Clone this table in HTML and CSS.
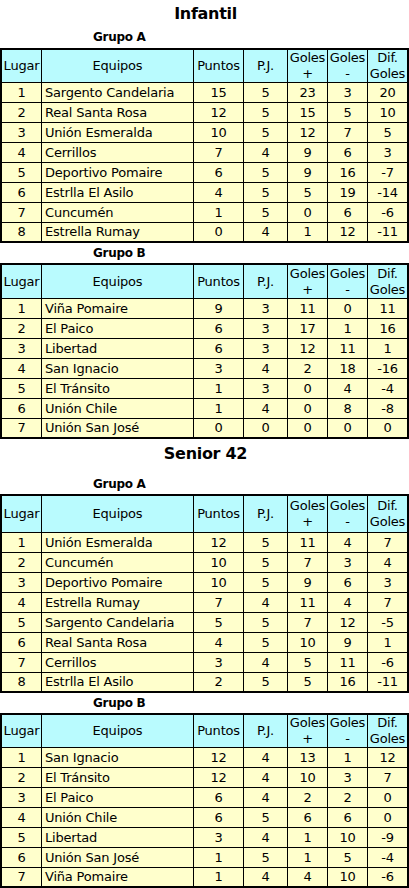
FILE: index.html
```html
<!DOCTYPE html>
<html lang="es">
<head>
<meta charset="utf-8">
<title>Posiciones</title>
<link rel="stylesheet" href="styles.css">
</head>
<body>
<div class="page">
  <h1 class="title title-first">Infantil</h1>
  <h2 class="group group-first">Grupo A</h2>
  <table class="standings hdr-32">
    <colgroup><col class="c-lugar"><col class="c-equipo"><col class="c-pts"><col class="c-pj"><col class="c-gf"><col class="c-gc"><col class="c-dif"></colgroup>
    <thead><tr><th>Lugar</th><th>Equipos</th><th>Puntos</th><th>P.J.</th><th>Goles<br>+</th><th>Goles<br>-</th><th>Dif.<br>Goles</th></tr></thead>
    <tbody>
      <tr><td>1</td><td class="team">Sargento Candelaria</td><td>15</td><td>5</td><td>23</td><td>3</td><td>20</td></tr>
      <tr><td>2</td><td class="team">Real Santa Rosa</td><td>12</td><td>5</td><td>15</td><td>5</td><td>10</td></tr>
      <tr><td>3</td><td class="team">Unión Esmeralda</td><td>10</td><td>5</td><td>12</td><td>7</td><td>5</td></tr>
      <tr><td>4</td><td class="team">Cerrillos</td><td>7</td><td>4</td><td>9</td><td>6</td><td>3</td></tr>
      <tr><td>5</td><td class="team">Deportivo Pomaire</td><td>6</td><td>5</td><td>9</td><td>16</td><td>-7</td></tr>
      <tr><td>6</td><td class="team">Estrlla El Asilo</td><td>4</td><td>5</td><td>5</td><td>19</td><td>-14</td></tr>
      <tr><td>7</td><td class="team">Cuncumén</td><td>1</td><td>5</td><td>0</td><td>6</td><td>-6</td></tr>
      <tr><td>8</td><td class="team">Estrella Rumay</td><td>0</td><td>4</td><td>1</td><td>12</td><td>-11</td></tr>
    </tbody>
  </table>
  <h2 class="group">Grupo B</h2>
  <table class="standings hdr-34">
    <colgroup><col class="c-lugar"><col class="c-equipo"><col class="c-pts"><col class="c-pj"><col class="c-gf"><col class="c-gc"><col class="c-dif"></colgroup>
    <thead><tr><th>Lugar</th><th>Equipos</th><th>Puntos</th><th>P.J.</th><th>Goles<br>+</th><th>Goles<br>-</th><th>Dif.<br>Goles</th></tr></thead>
    <tbody>
      <tr><td>1</td><td class="team">Viña Pomaire</td><td>9</td><td>3</td><td>11</td><td>0</td><td>11</td></tr>
      <tr><td>2</td><td class="team">El Paico</td><td>6</td><td>3</td><td>17</td><td>1</td><td>16</td></tr>
      <tr><td>3</td><td class="team">Libertad</td><td>6</td><td>3</td><td>12</td><td>11</td><td>1</td></tr>
      <tr><td>4</td><td class="team">San Ignacio</td><td>3</td><td>4</td><td>2</td><td>18</td><td>-16</td></tr>
      <tr><td>5</td><td class="team">El Tránsito</td><td>1</td><td>3</td><td>0</td><td>4</td><td>-4</td></tr>
      <tr><td>6</td><td class="team">Unión Chile</td><td>1</td><td>4</td><td>0</td><td>8</td><td>-8</td></tr>
      <tr><td>7</td><td class="team">Unión San José</td><td>0</td><td>0</td><td>0</td><td>0</td><td>0</td></tr>
    </tbody>
  </table>

  <h1 class="title title-second">Senior 42</h1>
  <h2 class="group">Grupo A</h2>
  <table class="standings hdr-37">
    <colgroup><col class="c-lugar"><col class="c-equipo"><col class="c-pts"><col class="c-pj"><col class="c-gf"><col class="c-gc"><col class="c-dif"></colgroup>
    <thead><tr><th>Lugar</th><th>Equipos</th><th>Puntos</th><th>P.J.</th><th>Goles<br>+</th><th>Goles<br>-</th><th>Dif.<br>Goles</th></tr></thead>
    <tbody>
      <tr><td>1</td><td class="team">Unión Esmeralda</td><td>12</td><td>5</td><td>11</td><td>4</td><td>7</td></tr>
      <tr><td>2</td><td class="team">Cuncumén</td><td>10</td><td>5</td><td>7</td><td>3</td><td>4</td></tr>
      <tr><td>3</td><td class="team">Deportivo Pomaire</td><td>10</td><td>5</td><td>9</td><td>6</td><td>3</td></tr>
      <tr><td>4</td><td class="team">Estrella Rumay</td><td>7</td><td>4</td><td>11</td><td>4</td><td>7</td></tr>
      <tr><td>5</td><td class="team">Sargento Candelaria</td><td>5</td><td>5</td><td>7</td><td>12</td><td>-5</td></tr>
      <tr><td>6</td><td class="team">Real Santa Rosa</td><td>4</td><td>5</td><td>10</td><td>9</td><td>1</td></tr>
      <tr><td>7</td><td class="team">Cerrillos</td><td>3</td><td>4</td><td>5</td><td>11</td><td>-6</td></tr>
      <tr><td>8</td><td class="team">Estrlla El Asilo</td><td>2</td><td>5</td><td>5</td><td>16</td><td>-11</td></tr>
    </tbody>
  </table>
  <h2 class="group">Grupo B</h2>
  <table class="standings hdr-32">
    <colgroup><col class="c-lugar"><col class="c-equipo"><col class="c-pts"><col class="c-pj"><col class="c-gf"><col class="c-gc"><col class="c-dif"></colgroup>
    <thead><tr><th>Lugar</th><th>Equipos</th><th>Puntos</th><th>P.J.</th><th>Goles<br>+</th><th>Goles<br>-</th><th>Dif.<br>Goles</th></tr></thead>
    <tbody>
      <tr><td>1</td><td class="team">San Ignacio</td><td>12</td><td>4</td><td>13</td><td>1</td><td>12</td></tr>
      <tr><td>2</td><td class="team">El Tránsito</td><td>12</td><td>4</td><td>10</td><td>3</td><td>7</td></tr>
      <tr><td>3</td><td class="team">El Paico</td><td>6</td><td>4</td><td>2</td><td>2</td><td>0</td></tr>
      <tr><td>4</td><td class="team">Unión Chile</td><td>6</td><td>5</td><td>6</td><td>6</td><td>0</td></tr>
      <tr><td>5</td><td class="team">Libertad</td><td>3</td><td>4</td><td>1</td><td>10</td><td>-9</td></tr>
      <tr><td>6</td><td class="team">Unión San José</td><td>1</td><td>5</td><td>1</td><td>5</td><td>-4</td></tr>
      <tr><td>7</td><td class="team">Viña Pomaire</td><td>1</td><td>4</td><td>4</td><td>10</td><td>-6</td></tr>
    </tbody>
  </table>
</div>
</body>
</html>
```
FILE: styles.css
```css
html, body {
  margin: 0;
  padding: 0;
  background: #ffffff;
}
body {
  font-family: "DejaVu Sans", "Liberation Sans", sans-serif;
  color: #000000;
  width: 409px;
}
.page {
  display: flex;
  flex-direction: column;
}
.title {
  margin: 0;
  font-size: 16px;
  font-weight: bold;
  letter-spacing: -0.3px;
  text-align: center;
  line-height: 27px;
  height: 27px;
  padding-left: 2px;
}
.title-second {
  line-height: 30px;
  height: 30px;
  padding-bottom: 5px;
}
.group {
  margin: 0;
  font-size: 12px;
  font-weight: bold;
  letter-spacing: -0.3px;
  line-height: 20px;
  height: 20px;
  padding-left: 93px;
}
.group-first {
  line-height: 21px;
  height: 21px;
}
.standings {
  width: 409px;
  table-layout: fixed;
  border-collapse: separate;
  border-spacing: 0;
  border: 2px solid #000;
  font-size: 13px;
  letter-spacing: -0.2px;
}
.c-lugar { width: 40px; }
.c-equipo { width: 152px; }
.c-pts { width: 50px; }
.c-pj { width: 44px; }
.c-gf { width: 40px; }
.c-gc { width: 40px; }
.c-dif { width: 39px; }
.standings th,
.standings td {
  box-sizing: border-box;
  padding: 0;
  text-align: center;
  vertical-align: middle;
  border-right: 1px solid #000;
  border-bottom: 1px solid #000;
  white-space: nowrap;
  overflow: hidden;
}
.standings th:last-child,
.standings td:last-child {
  border-right: none;
}
.standings th {
  background: #b9fbfe;
  font-weight: normal;
  line-height: 16px;
}
.standings td {
  background: #ffffcc;
  line-height: 16px;
}
.standings tbody tr {
  height: 20px;
}
.standings tbody tr:last-child {
  height: 18px;
}
.standings tbody tr:last-child td {
  border-bottom: none;
}
.standings td.team {
  text-align: left;
  padding-left: 3px;
}
.hdr-32 thead tr { height: 32px; }
.hdr-34 thead tr { height: 34px; }
.hdr-37 thead tr { height: 37px; }
```
